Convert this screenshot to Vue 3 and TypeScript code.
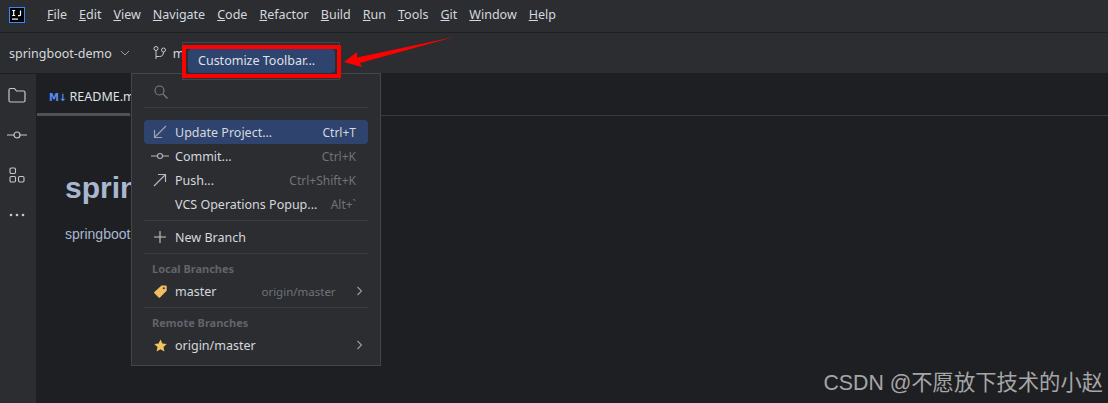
<script setup lang="ts">
const menus = [
  { k: 'F', r: 'ile' }, { k: 'E', r: 'dit' }, { k: 'V', r: 'iew' }, { k: 'N', r: 'avigate' },
  { k: 'C', r: 'ode' }, { k: 'R', r: 'efactor' }, { k: 'B', r: 'uild' }, { k: 'R', r: 'un' },
  { k: 'T', r: 'ools' }, { k: 'G', r: 'it' }, { k: 'W', r: 'indow' }, { k: 'H', r: 'elp' },
]
const actions = [
  { icon: 'update', label: 'Update Project...', key: 'Ctrl+T', active: true },
  { icon: 'commit', label: 'Commit...', key: 'Ctrl+K', active: false },
  { icon: 'push', label: 'Push...', key: 'Ctrl+Shift+K', active: false },
  { icon: '', label: 'VCS Operations Popup...', key: 'Alt+`', active: false },
]
</script>

<template>
  <div class="ide">
    <header class="menubar">
      <svg class="logo" width="16" height="16" viewBox="0 0 16 16">
        <rect x="0.5" y="0.5" width="15" height="15" fill="#000" stroke="#2f8bff" />
        <rect x="3" y="11.5" width="6" height="1.2" fill="#fff" />
        <path d="M3.2 3.5h3M4.7 3.5v5M3.2 8.5h3M11.5 3.5v4.2q0 1-1.2 1H9" fill="none" stroke="#fff" stroke-width="1.2" />
      </svg>
      <nav class="menus">
        <span v-for="m in menus" :key="m.k + m.r"><u>{{ m.k }}</u>{{ m.r }}</span>
      </nav>
    </header>

    <div class="toolbar">
      <span class="project">springboot-demo</span>
      <svg class="chev" width="10" height="10" viewBox="0 0 10 10"><path d="M1 3l4 4 4-4" fill="none" stroke="#9a9da3" stroke-width="1" /></svg>
      <svg class="branch" width="16" height="16" viewBox="0 0 16 16" fill="none" stroke="#c5c8ce" stroke-width="1">
        <circle cx="4" cy="3.5" r="2" /><circle cx="11.5" cy="5" r="2" />
        <path d="M4 5.5V14M4 11.5h3.5q4 0 4-4.5" />
      </svg>
      <span class="branch-name">m</span>
    </div>

    <div class="body">
      <aside class="rail">
        <svg width="18" height="16" viewBox="0 0 18 16" fill="none" stroke="#c5c8ce" stroke-width="1.2">
          <path d="M1 3q0-1.500 1.500-1.500h4L8.500 4h7q1.500 0 1.500 1.500v8q0 1.500-1.500 1.500h-13Q1 15 1 13.500z" />
        </svg>
        <svg width="20" height="10" viewBox="0 0 20 10" fill="none" stroke="#c5c8ce" stroke-width="1.2">
          <circle cx="10" cy="5" r="3" /><path d="M0 5h7M13 5h7" />
        </svg>
        <svg width="16" height="16" viewBox="0 0 16 16" fill="none" stroke="#c5c8ce" stroke-width="1.100">
          <rect x="1" y="1" width="5.500" height="5.500" rx="1.200" />
          <rect x="1" y="9.500" width="5.500" height="5.500" rx="1.200" />
          <rect x="9.500" y="9.500" width="5.500" height="5.500" rx="1.200" />
        </svg>
        <svg width="16" height="4" viewBox="0 0 16 4" fill="#c5c8ce">
          <circle cx="2" cy="2" r="1.300" /><circle cx="8" cy="2" r="1.300" /><circle cx="14" cy="2" r="1.300" />
        </svg>
      </aside>
      <main class="editor">
        <div class="tabs">
          <div class="tab"><span class="md">M↓</span> README.md</div>
        </div>
        <article class="doc">
          <h1>springboot-demo</h1>
          <p>springboot-demo</p>
        </article>
      </main>
    </div>

    <div class="popup">
      <div class="search">
        <svg width="14" height="14" viewBox="0 0 14 14" fill="none" stroke="#7d8087" stroke-width="1.100">
          <circle cx="5.500" cy="5.500" r="4.500" /><path d="M9 9l4.500 4.500" />
        </svg>
      </div>
      <div class="group">
        <div v-for="a in actions" :key="a.label" class="row" :class="{ active: a.active }">
          <span class="ico">
            <svg v-if="a.icon === 'update'" width="14" height="14" viewBox="0 0 14 14" fill="none" stroke="#9fa3aa" stroke-width="1.200">
              <path d="M13 1L1.500 12.500M1.500 5v7.500H9" />
            </svg>
            <svg v-else-if="a.icon === 'commit'" width="18" height="8" viewBox="0 0 18 8" fill="none" stroke="#b4b7bd" stroke-width="1.100">
              <circle cx="9" cy="4" r="2.500" /><path d="M0 4h6.500M11.500 4H18" />
            </svg>
            <svg v-else-if="a.icon === 'push'" width="14" height="14" viewBox="0 0 14 14" fill="none" stroke="#b4b7bd" stroke-width="1.200">
              <path d="M1 13L12.500 1.500M5 1.500h7.500V9" />
            </svg>
          </span>
          <span class="label">{{ a.label }}</span>
          <span class="key">{{ a.key }}</span>
        </div>
      </div>
      <div class="sep"></div>
      <div class="row new">
        <span class="ico">
          <svg width="14" height="14" viewBox="0 0 14 14" stroke="#c5c8ce" stroke-width="1.100"><path d="M7 1v12M1 7h12" /></svg>
        </span>
        <span class="label">New Branch</span>
      </div>
      <div class="sep before-heading"></div>
      <div class="heading">Local Branches</div>
      <div class="row branch-row">
        <span class="ico">
          <svg width="15" height="15" viewBox="0 0 15 15">
            <path d="M8.500 1.500h4.200q1 0 1 1v4.200L7 13.500q-.7.700-1.400 0l-4.200-4.200q-.7-.7 0-1.400z" fill="#f0bd62" />
            <circle cx="10.800" cy="4.300" r="1" fill="#2b2d30" />
          </svg>
        </span>
        <span class="label">master</span>
        <span class="track">origin/master</span>
        <svg class="arrow" width="7" height="10" viewBox="0 0 7 10" fill="none" stroke="#9a9da3" stroke-width="1.100"><path d="M1.500 1l4 4-4 4" /></svg>
      </div>
      <div class="sep before-heading"></div>
      <div class="heading">Remote Branches</div>
      <div class="row branch-row">
        <span class="ico">
          <svg width="13" height="13" viewBox="0 0 13 13"><path d="M6.500.5l1.900 4 4.300.5-3.200 3 .9 4.400-3.900-2.200-3.900 2.200.9-4.400L.3 5l4.300-.5z" fill="#f2c55c" /></svg>
        </span>
        <span class="label">origin/master</span>
        <svg class="arrow end" width="7" height="10" viewBox="0 0 7 10" fill="none" stroke="#9a9da3" stroke-width="1.100"><path d="M1.500 1l4 4-4 4" /></svg>
      </div>
    </div>

    <div class="ctx">
      <div class="ctx-item">Customize Toolbar...</div>
    </div>
    <div class="redbox"></div>
    <svg class="pointer" width="116" height="36" viewBox="0 0 116 36">
      <path d="M2 26L15 16 15 21.500 112 1 18 27 20 31z" fill="#f00" />
    </svg>

    <div class="mark">CSDN @不愿放下技术的小赵</div>
  </div>
</template>

<style>
body { margin: 0; background: #1e1f22; }
</style>

<style scoped>
.ide {
  position: relative;
  width: 1108px;
  height: 403px;
  overflow: hidden;
  display: flex;
  flex-direction: column;
  background: #1e1f22;
  color: #d5d8de;
  font: 12.500px "Noto Sans", "Noto Sans CJK SC", sans-serif;
}
.menubar {
  height: 33px;
  flex: none;
  box-sizing: border-box;
  display: flex;
  align-items: center;
  padding-left: 9px;
  background: #2b2d30;
  border-bottom: 1px solid #1e1f22;
}
.logo { margin-top: -3px; }
.menus { display: flex; gap: 12px; margin-left: 22px; margin-top: -3px; }
.toolbar {
  height: 41px;
  flex: none;
  box-sizing: border-box;
  display: flex;
  align-items: center;
  padding-left: 9px;
  background: #2b2d30;
  border-bottom: 1px solid #1e1f22;
}
.chev { margin-left: 8px; }
.branch { margin-left: 22px; }
.branch-name { margin-left: 5px; }
.body { flex: 1; display: flex; min-height: 0; }
.rail {
  width: 37px;
  flex: none;
  box-sizing: border-box;
  border-right: 1px solid #1e1f22;
  background: #2b2d30;
  display: flex;
  flex-direction: column;
  align-items: center;
  padding: 13px 2px 0 0;
  gap: 29px;
}
.rail svg:nth-child(2) { margin-top: -2px; }
.rail svg:nth-child(3) { margin-top: -2px; }
.rail svg:nth-child(4) { margin-top: 1px; }
.editor { flex: 1; min-width: 0; }
.tabs {
  height: 42px;
  box-sizing: border-box;
  border-bottom: 1px solid #393b40;
}
.tab {
  width: 93px;
  height: 42px;
  box-sizing: border-box;
  padding: 14px 0 0 12px;
  white-space: nowrap;
  border-bottom: 3px solid #4e5157;
  color: #dfe1e5;
}
.md { color: #548af7; font: bold 10px "DejaVu Sans", sans-serif; letter-spacing: -0.5px; }
.doc { padding: 55px 0 0 28px; font-family: "Liberation Sans", sans-serif; color: #a9b7d0; }
.doc h1 { margin: 0; font-size: 30px; line-height: 34px; font-weight: 700; white-space: nowrap; }
.doc p { margin: 21px 0 0; font-size: 14px; line-height: 16px; white-space: nowrap; }
.popup {
  position: absolute;
  left: 131px;
  top: 73px;
  width: 250px;
  height: 293px;
  box-sizing: border-box;
  background: #2b2d30;
  border: 1px solid #43454a;
  padding: 0 12px;
}
.search {
  height: 34px;
  box-sizing: border-box;
  padding: 11px 0 0 10px;
  border-bottom: 1px solid #393b40;
  margin-bottom: 12px;
}
.search svg { display: block; }
.row {
  height: 24px;
  display: flex;
  align-items: center;
  border-radius: 4px;
  padding-right: 12px;
  color: #d5d8de;
  white-space: nowrap;
}
.row.active { background: #2e436e; }
.branch-row { padding-right: 5px; }
.ico { width: 31px; flex: none; display: flex; justify-content: center; }
.row .ico svg { margin-left: 1px; }
.label { flex: none; }
.key { margin-left: auto; font-size: 12px; color: #6f737a; }
.active .key { color: #d5d8de; }
.sep { height: 1px; background: #393b40; margin: 4px 0 4px; }
.sep.before-heading { margin-bottom: 0; }
.heading {
  height: 25px;
  box-sizing: border-box;
  padding: 7px 0 0 8px;
  font-size: 11px;
  font-weight: 700;
  color: #61646b;
  line-height: 15px;
  white-space: nowrap;
}
.track { margin-left: 45px; color: #6f737a; font-size: 11.500px; }
.arrow { margin-left: auto; flex: none; }
.ctx {
  position: absolute;
  left: 182px;
  top: 42px;
  width: 158px;
  height: 38px;
  box-sizing: border-box;
  border: 1px solid #43454a;
  background: #2b2d30;
  padding: 6px 4px 0 5px;
}
.ctx-item {
  height: 24px;
  line-height: 24px;
  padding-left: 10px;
  background: #2e436e;
  border-radius: 4px;
  color: #dfe1e5;
  white-space: nowrap;
}
.redbox {
  position: absolute;
  left: 182px;
  top: 45px;
  width: 159px;
  height: 33px;
  box-sizing: border-box;
  border: 4px solid #f00;
  border-radius: 1px;
  pointer-events: none;
}
.pointer { position: absolute; left: 342px; top: 36px; }
.mark {
  position: absolute;
  right: 5px;
  bottom: 7px;
  font-size: 21.300px;
  line-height: 26px;
  color: #a6a6a6;
  white-space: nowrap;
  font-family: "Liberation Sans", "Noto Sans CJK SC", sans-serif;
}
</style>
